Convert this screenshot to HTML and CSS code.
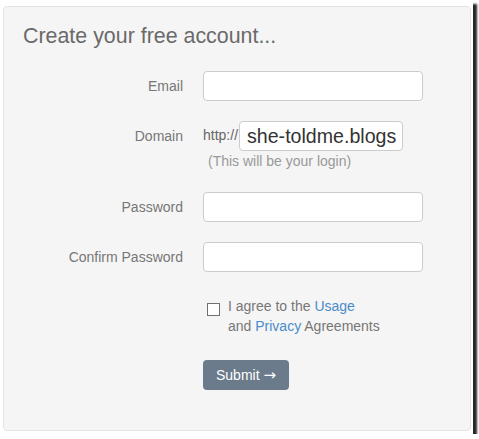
FILE: index.html
```html
<!DOCTYPE html>
<html>
<head>
<meta charset="utf-8">
<link rel="stylesheet" href="styles.css">
</head>
<body>
<div class="frame">
  <div class="card">
    <h1 class="title">Create your free account...</h1>
    <form class="form">
      <div class="row">
        <label class="label">Email</label>
        <input class="field" type="text">
      </div>
      <div class="row row-domain">
        <label class="label">Domain</label>
        <div class="domain">
          <span class="prefix">http://</span>
          <input class="field field-domain" type="text" value="she-toldme.blogs">
        </div>
      </div>
      <div class="help">(This will be your login)</div>
      <div class="row row-pass">
        <label class="label">Password</label>
        <input class="field" type="password">
      </div>
      <div class="row row-confirm">
        <label class="label">Confirm Password</label>
        <input class="field" type="password">
      </div>
      <div class="agree">
        <input class="check" type="checkbox">
        <div class="agree-text">I agree to the <a class="link" href="#">Usage</a><br>and <a class="link" href="#">Privacy</a> Agreements</div>
      </div>
      <div class="actions">
        <button class="submit" type="button">Submit <span class="arrow">→</span></button>
      </div>
    </form>
  </div>
</div>
</body>
</html>
```
FILE: styles.css
```css
html, body {
  margin: 0;
  padding: 0;
  background: #ffffff;
}
body {
  font-family: "Liberation Sans", Arial, sans-serif;
  font-size: 14px;
  line-height: 20px;
  color: #777777;
}
.frame {
  width: 473px;
  height: 434px;
  box-sizing: border-box;
  padding: 6px 2px 3px 3px;
  background: #ffffff;
  box-shadow: 4px 4px 2px #262626;
}
.card {
  height: 100%;
  box-sizing: border-box;
  background: #f5f5f5;
  border: 1px solid #e3e3e3;
  border-radius: 4px;
  padding: 17px 19px 0 19px;
}
.title {
  margin: 0;
  font-weight: normal;
  font-size: 21.4px;
  line-height: 24px;
  color: #6a6a6a;
}
.form {
  margin: 23px 0 0 0;
}
.row {
  display: flex;
  align-items: center;
  height: 30px;
}
.row-domain {
  margin-top: 20px;
}
.row-pass {
  margin-top: 21px;
}
.row-confirm {
  margin-top: 20px;
}
.label {
  width: 160px;
  margin-right: 20px;
  text-align: right;
  color: #777777;
}
.field {
  width: 220px;
  height: 30px;
  box-sizing: border-box;
  margin: 0;
  border: 1px solid #cccccc;
  border-radius: 4px;
  background: #ffffff;
  padding: 0 7px;
  font-family: "Liberation Sans", Arial, sans-serif;
  outline: none;
}
.domain {
  display: flex;
  align-items: center;
}
.prefix {
  color: #666666;
  margin-right: 1px;
  position: relative;
  top: -1px;
}
.field-domain {
  width: 164px;
  font-size: 19.6px;
  color: #333333;
  padding: 0 5px 0 7px;
}
.help {
  margin-left: 185px;
  color: #999999;
  line-height: 20px;
}
.agree {
  display: flex;
  align-items: flex-start;
  margin: 24px 0 0 184px;
}
.check {
  appearance: none;
  -webkit-appearance: none;
  width: 13px;
  height: 13px;
  box-sizing: border-box;
  margin: 7px 8px 0 0;
  border: 1px solid #707070;
  background: #ffffff;
}
.agree-text {
  color: #777777;
}
.link {
  color: #4a8bcb;
  text-decoration: none;
}
.actions {
  margin: 24px 0 0 180px;
}
.submit {
  width: 86px;
  height: 30px;
  border: none;
  border-radius: 4px;
  background: #6b7b8b;
  color: #ffffff;
  font-family: "Liberation Sans", Arial, sans-serif;
  font-size: 14px;
  padding: 0;
}
.arrow {
  font-family: "DejaVu Sans", sans-serif;
  font-size: 15px;
}
```
